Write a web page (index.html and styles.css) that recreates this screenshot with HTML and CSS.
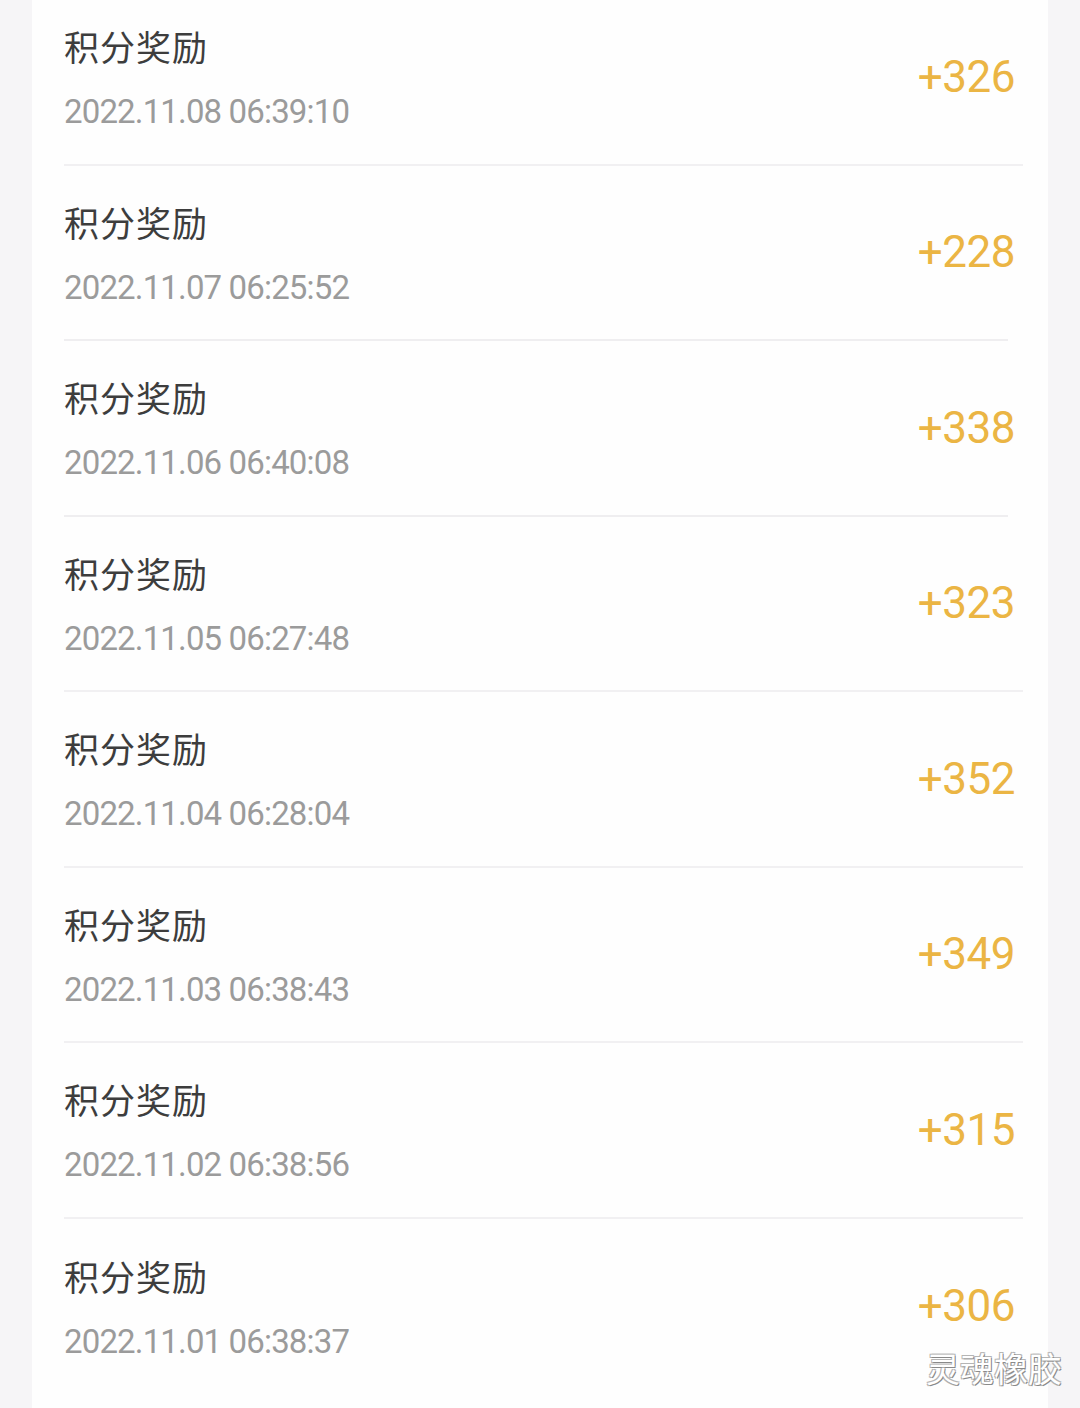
FILE: index.html
```html
<!DOCTYPE html>
<html lang="zh-CN">
<head>
    <meta charset="UTF-8">
    <meta name="viewport" content="width=device-width, initial-scale=1.0">
    <title>积分明细</title>
    <link rel="stylesheet" href="styles.css">
</head>
<body>

    <div class="card">
        <ul class="record-list">
            <li class="record">
                <div class="record-info">
                    <span class="record-title">积分奖励</span>
                    <span class="record-time">2022.11.08 06:39:10</span>
                </div>
                <span class="record-amount">+326</span>
            </li>
            <li class="record short-line">
                <div class="record-info">
                    <span class="record-title">积分奖励</span>
                    <span class="record-time">2022.11.07 06:25:52</span>
                </div>
                <span class="record-amount">+228</span>
            </li>
            <li class="record short-line">
                <div class="record-info">
                    <span class="record-title">积分奖励</span>
                    <span class="record-time">2022.11.06 06:40:08</span>
                </div>
                <span class="record-amount">+338</span>
            </li>
            <li class="record">
                <div class="record-info">
                    <span class="record-title">积分奖励</span>
                    <span class="record-time">2022.11.05 06:27:48</span>
                </div>
                <span class="record-amount">+323</span>
            </li>
            <li class="record">
                <div class="record-info">
                    <span class="record-title">积分奖励</span>
                    <span class="record-time">2022.11.04 06:28:04</span>
                </div>
                <span class="record-amount">+352</span>
            </li>
            <li class="record">
                <div class="record-info">
                    <span class="record-title">积分奖励</span>
                    <span class="record-time">2022.11.03 06:38:43</span>
                </div>
                <span class="record-amount">+349</span>
            </li>
            <li class="record">
                <div class="record-info">
                    <span class="record-title">积分奖励</span>
                    <span class="record-time">2022.11.02 06:38:56</span>
                </div>
                <span class="record-amount">+315</span>
            </li>
            <li class="record">
                <div class="record-info">
                    <span class="record-title">积分奖励</span>
                    <span class="record-time">2022.11.01 06:38:37</span>
                </div>
                <span class="record-amount">+306</span>
            </li>
        </ul>
    </div>

    <!-- 水印 -->
    <div class="watermark">灵魂橡胶</div>

</body>
</html>
```

FILE: styles.css
```css
body {
    margin: 0;
    height: 1408px;
    overflow: hidden;
    background-color: #f6f5f7;
    font-family: Roboto, "Noto Sans CJK SC", sans-serif;
    position: relative;
}

.card {
    margin-left: 32px;
    width: 1016px;
    height: 1420px;
    margin-top: -10px;
    background-color: #fefefe;
}

.record-list {
    list-style: none;
    margin: 0;
    padding: 0;
}

.record {
    display: flex;
    justify-content: space-between;
    align-items: center;
    height: 175.5px;
    box-sizing: border-box;
    margin: 0 25px 0 32px;
    padding-right: 8px;
    border-bottom: 2px solid #f1f0f2;
}

.record:last-child {
    border-bottom: none;
}

.record.short-line {
    margin-right: 40px;
    padding-right: 0;
    border-bottom-color: #efeef0;
}

.record.short-line .record-amount {
    margin-right: -7px;
}

.record-info {
    display: flex;
    flex-direction: column;
    padding-top: 5px;
}

.record-title {
    font-family: "Noto Sans CJK SC", sans-serif;
    font-size: 35px;
    line-height: 36px;
    color: #3d3d3d;
    letter-spacing: 1px;
}

.record-time {
    margin-top: 30px;
    font-size: 33px;
    line-height: 36px;
    color: #9b9b9b;
    letter-spacing: -0.85px;
}

.record-amount {
    font-size: 44px;
    line-height: 46px;
    color: #ebb544;
    letter-spacing: -0.5px;
}

.watermark {
    position: absolute;
    right: 18px;
    top: 1343px;
    font-family: "Noto Sans CJK SC", sans-serif;
    font-size: 34px;
    color: #ffffff;
    text-shadow: 1px 1px 0 #8a8a8a, -1px -1px 0 #b5b5b5, 1px -1px 0 #b5b5b5, -1px 1px 0 #b5b5b5;
}
```
